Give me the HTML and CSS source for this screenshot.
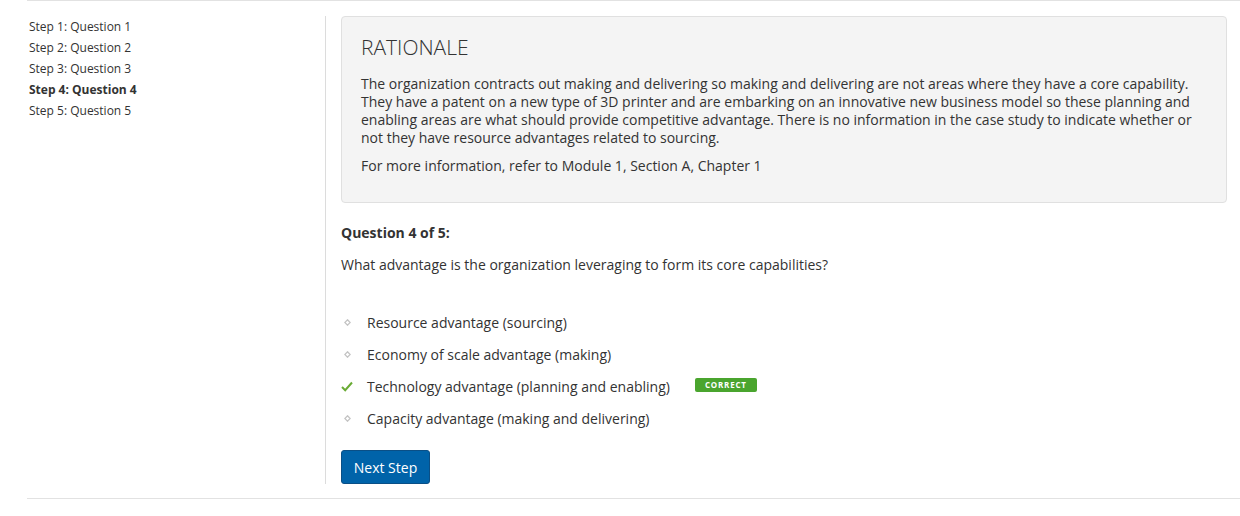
FILE: index.html
```html
<!DOCTYPE html>
<html>
<head>
<meta charset="utf-8">
<link rel="stylesheet" href="styles.css">
</head>
<body>
<div class="page">
  <div class="layout">
    <nav class="sidebar">
      <div class="step">Step 1: Question 1</div>
      <div class="step">Step 2: Question 2</div>
      <div class="step">Step 3: Question 3</div>
      <div class="step current">Step 4: Question 4</div>
      <div class="step">Step 5: Question 5</div>
    </nav>
    <main class="main">
      <section class="rationale">
        <h2 class="rationale-title">RATIONALE</h2>
        <p class="rationale-text">The organization contracts out making and delivering so making and delivering are not areas where they have a core capability. They have a patent on a new type of 3D printer and are embarking on an innovative new business model so these planning and enabling areas are what should provide competitive advantage. There is no information in the case study to indicate whether or not they have resource advantages related to sourcing.</p>
        <p class="rationale-more">For more information, refer to Module 1, Section A, Chapter 1</p>
      </section>
      <h3 class="q-title">Question 4 of 5:</h3>
      <p class="q-text">What advantage is the organization leveraging to form its core capabilities?</p>
      <ul class="options">
        <li class="option"><span class="mark"><svg class="dot" width="7" height="7" viewBox="0 0 7 7"><path d="M3.5 0.8L6.2 3.5L3.5 6.2L0.8 3.5Z" fill="none" stroke="#c4c4c4" stroke-width="1.3"/></svg></span><span>Resource advantage (sourcing)</span></li>
        <li class="option"><span class="mark"><svg class="dot" width="7" height="7" viewBox="0 0 7 7"><path d="M3.5 0.8L6.2 3.5L3.5 6.2L0.8 3.5Z" fill="none" stroke="#c4c4c4" stroke-width="1.3"/></svg></span><span>Economy of scale advantage (making)</span></li>
        <li class="option"><span class="mark"><svg width="12" height="11" viewBox="0 0 12 11"><path d="M1 6L4.2 9.2L11 1.5" fill="none" stroke="#6aab35" stroke-width="2"/></svg></span><span>Technology advantage (planning and enabling)</span><span class="badge">CORRECT</span></li>
        <li class="option"><span class="mark"><svg class="dot" width="7" height="7" viewBox="0 0 7 7"><path d="M3.5 0.8L6.2 3.5L3.5 6.2L0.8 3.5Z" fill="none" stroke="#c4c4c4" stroke-width="1.3"/></svg></span><span>Capacity advantage (making and delivering)</span></li>
      </ul>
      <button class="next-btn">Next Step</button>
    </main>
  </div>
</div>
</body>
</html>
```

FILE: styles.css
```css
html, body {
  margin: 0;
  padding: 0;
  background: #fff;
}
body {
  font-family: "Open Sans", "Noto Sans", sans-serif;
  color: #333;
}
.page {
  margin-left: 27px;
  border-top: 1px solid #e2e2e2;
  border-bottom: 1px solid #e2e2e2;
  padding: 15px 0 14px;
}
.layout {
  display: flex;
}
.sidebar {
  width: 299px;
  flex: none;
  border-right: 1px solid #dcdcdc;
  padding-left: 2px;
  box-sizing: border-box;
}
.step {
  font-size: 12px;
  line-height: 21px;
  color: #333;
}
.step.current {
  font-weight: 700;
}
.main {
  flex: 1;
  padding-left: 15px;
  padding-right: 13px;
}
.rationale {
  background: #f4f4f4;
  border: 1px solid #e0e0e0;
  border-radius: 4px;
  padding: 18px 20px 27px 19px;
  height: 187px;
  box-sizing: border-box;
}
.rationale-title {
  margin: 0 0 16px;
  font-size: 21px;
  line-height: 24px;
  font-weight: 300;
  color: #333;
}
.rationale-text {
  margin: 0 0 10px;
  font-size: 14px;
  line-height: 18px;
}
.rationale-more {
  margin: 0;
  font-size: 14px;
  line-height: 18px;
}
.q-title {
  margin: 20px 0 12px;
  font-size: 14px;
  line-height: 20px;
  font-weight: 700;
}
.q-text {
  margin: 0 0 31px;
  font-size: 14px;
  line-height: 20px;
}
.options {
  list-style: none;
  margin: 0 0 16px;
  padding: 0;
}
.option {
  display: flex;
  align-items: center;
  height: 32px;
  font-size: 14px;
}
.mark {
  width: 26px;
  flex: none;
  display: flex;
  align-items: center;
}
.mark .dot {
  margin-left: 3px;
}
.badge {
  margin-left: 25px;
  background: #4aa52e;
  color: #fff;
  font-size: 8px;
  font-weight: 700;
  letter-spacing: 0.8px;
  line-height: 14px;
  padding: 0 10px;
  border-radius: 2px;
  margin-top: -2px;
}
.next-btn {
  display: block;
  background: #0063a9;
  color: #fff;
  border: 1px solid #0a4f86;
  border-radius: 3px;
  font-family: "Open Sans", "Noto Sans", sans-serif;
  font-size: 14px;
  height: 34px;
  width: 89px;
  padding: 0;
}
```
